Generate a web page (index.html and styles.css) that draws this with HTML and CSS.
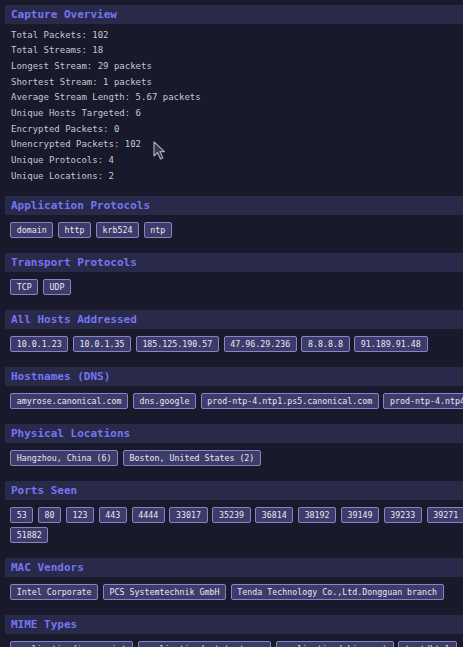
FILE: index.html
```html
<!DOCTYPE html>
<html lang="en">
<head>
  <meta charset="UTF-8">
  <title>Capture Report</title>
  <meta name="viewport" content="width=device-width, initial-scale=1.0">
  <link rel="stylesheet" href="styles.css">
</head>
<body>
  <div class="report">
    <section class="block block-stats">
      <h2 class="block-title">Capture Overview</h2>
      <ul class="stats">
        <li>Total Packets: 102</li>
        <li>Total Streams: 18</li>
        <li>Longest Stream: 29 packets</li>
        <li>Shortest Stream: 1 packets</li>
        <li>Average Stream Length: 5.67 packets</li>
        <li>Unique Hosts Targeted: 6</li>
        <li>Encrypted Packets: 0</li>
        <li>Unencrypted Packets: 102</li>
        <li>Unique Protocols: 4</li>
        <li>Unique Locations: 2</li>
      </ul>
    </section>

    <section class="block">
      <h2 class="block-title">Application Protocols</h2>
      <div class="tags">
        <span class="tag">domain</span>
        <span class="tag">http</span>
        <span class="tag">krb524</span>
        <span class="tag">ntp</span>
      </div>
    </section>

    <section class="block">
      <h2 class="block-title">Transport Protocols</h2>
      <div class="tags">
        <span class="tag">TCP</span>
        <span class="tag">UDP</span>
      </div>
    </section>

    <section class="block">
      <h2 class="block-title">All Hosts Addressed</h2>
      <div class="tags">
        <span class="tag">10.0.1.23</span>
        <span class="tag">10.0.1.35</span>
        <span class="tag">185.125.190.57</span>
        <span class="tag">47.96.29.236</span>
        <span class="tag">8.8.8.8</span>
        <span class="tag">91.189.91.48</span>
      </div>
    </section>

    <section class="block">
      <h2 class="block-title">Hostnames (DNS)</h2>
      <div class="tags tags-row">
        <span class="tag">amyrose.canonical.com</span>
        <span class="tag">dns.google</span>
        <span class="tag">prod-ntp-4.ntp1.ps5.canonical.com</span>
        <span class="tag">prod-ntp-4.ntp4.ps5.canonical.com</span>
      </div>
    </section>

    <section class="block">
      <h2 class="block-title">Physical Locations</h2>
      <div class="tags">
        <span class="tag">Hangzhou, China (6)</span>
        <span class="tag">Boston, United States (2)</span>
      </div>
    </section>

    <section class="block">
      <h2 class="block-title">Ports Seen</h2>
      <div class="tags">
        <span class="tag">53</span>
        <span class="tag">80</span>
        <span class="tag">123</span>
        <span class="tag">443</span>
        <span class="tag">4444</span>
        <span class="tag">33017</span>
        <span class="tag">35239</span>
        <span class="tag">36814</span>
        <span class="tag">38192</span>
        <span class="tag">39149</span>
        <span class="tag">39233</span>
        <span class="tag">39271</span>
        <span class="tag">51882</span>
      </div>
    </section>

    <section class="block">
      <h2 class="block-title">MAC Vendors</h2>
      <div class="tags">
        <span class="tag">Intel Corporate</span>
        <span class="tag">PCS Systemtechnik GmbH</span>
        <span class="tag">Tenda Technology Co.,Ltd.Dongguan branch</span>
      </div>
    </section>

    <section class="block">
      <h2 class="block-title">MIME Types</h2>
      <div class="tags">
        <span class="tag">application/javascript</span>
        <span class="tag">application/octet-stream</span>
        <span class="tag">application/pkix-cert</span>
        <span class="tag">text/html</span>
      </div>
    </section>
  </div>

  <!-- mouse pointer left over the stats -->
  <svg class="pointer" width="14" height="20" viewBox="0 0 14 20">
    <path d="M1 1 L1 15 L4.5 11.5 L7.5 18 L9.8 17 L6.9 10.6 L11.5 10.6 Z" fill="#353848" stroke="#a4a7b4" stroke-width="1.2" stroke-linejoin="round"/>
  </svg>
</body>
</html>
```

FILE: styles.css
```css
html {
  background: #181a2b;
  overflow-x: hidden;
}
body {
  margin: 0;
  padding: 5px 5px;
  font-family: 'DejaVu Sans Mono', monospace;
  color: #c6c7d0;
  position: relative;
}
.report {
  width: 495px;
}
.block {
  margin-bottom: 15px;
}
.block-title {
  margin: 0;
  height: 19px;
  line-height: 19px;
  padding-left: 6px;
  background: #29294a;
  color: #7575f2;
  font-size: 11px;
  font-weight: bold;
}
.block-stats {
  margin-bottom: 11.5px;
}
.stats {
  list-style: none;
  margin: 0;
  padding: 3.5px 6px 0;
  font-size: 9px;
  line-height: 15.67px;
}
.tags {
  display: flex;
  flex-wrap: wrap;
  gap: 4.5px;
  padding: 7px 5px 0;
}
.tags-row {
  flex-wrap: nowrap;
}
.tag {
  flex: none;
  display: inline-block;
  padding: 0 5.7px;
  line-height: 14px;
  font-size: 8.3px;
  color: #e8e8f4;
  background: #3c3b69;
  border: 1px solid #8784c6;
  border-radius: 2px;
  white-space: nowrap;
}
.pointer {
  position: absolute;
  left: 153px;
  top: 141px;
}
```
